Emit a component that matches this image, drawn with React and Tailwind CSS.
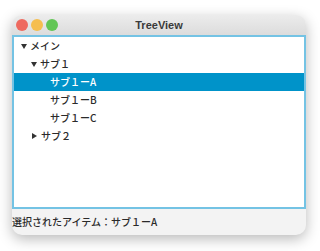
import React from "react";

const font = { fontFamily: '"Noto Sans CJK JP", "Noto Sans", sans-serif' };

function Down() {
  return (
    <svg width="6" height="5" viewBox="0 0 6 5" className="shrink-0">
      <polygon points="0,0 6,0 3,5" fill="#333" />
    </svg>
  );
}
function Right() {
  return (
    <svg width="5" height="6" viewBox="0 0 5 6" className="shrink-0">
      <polygon points="0,0 5,3 0,6" fill="#333" />
    </svg>
  );
}

function Row({ pl, icon, label, selected }) {
  return (
    <div
      className={`h-[18px] flex items-center text-[10px] font-medium leading-none ${selected ? "bg-[#0093c9] text-white" : "text-[#2a2a2a]"}`}
      style={{ paddingLeft: pl }}
    >
      {icon && <span className="w-[9px] flex items-center">{icon}</span>}
      <span>{label}</span>
    </div>
  );
}

export default function App() {
  return (
    <div className="w-[320px] h-[251px] bg-white pt-[15px] pl-[12px]" style={font}>
      <div className="w-[294px] h-[220px] rounded-[10px] bg-[#f3f3f3] shadow-[0_4px_14px_rgba(0,0,0,0.28)] flex flex-col overflow-hidden">
        <div className="h-[20px] shrink-0 relative flex items-center justify-center bg-gradient-to-b from-[#ececec] to-[#dcdcdc]">
          <div className="absolute left-[4px] top-[4px] flex gap-[3px]">
            <span className="w-[12px] h-[12px] rounded-full bg-[#ee6a5f]" />
            <span className="w-[12px] h-[12px] rounded-full bg-[#f5be4f]" />
            <span className="w-[12px] h-[12px] rounded-full bg-[#62c655]" />
          </div>
          <span className="text-[11px] font-bold text-[#3a3a3a] leading-none" style={{ fontFamily: '"Liberation Sans", Arial, sans-serif' }}>TreeView</span>
        </div>
        <div className="h-[174px] shrink-0 bg-white border-2 border-[#74c3e4]">
          <Row pl={7} icon={<Down />} label="メイン" />
          <Row pl={17} icon={<Down />} label="サブ１" />
          <Row pl={36} label="サブ１ーA" selected />
          <Row pl={36} label="サブ１ーB" />
          <Row pl={36} label="サブ１ーC" />
          <Row pl={18} icon={<Right />} label="サブ２" />
        </div>
        <div className="flex-1 flex items-center text-[10px] font-medium text-[#2a2a2a] leading-none">
          選択されたアイテム：サブ１ーA
        </div>
      </div>
    </div>
  );
}
